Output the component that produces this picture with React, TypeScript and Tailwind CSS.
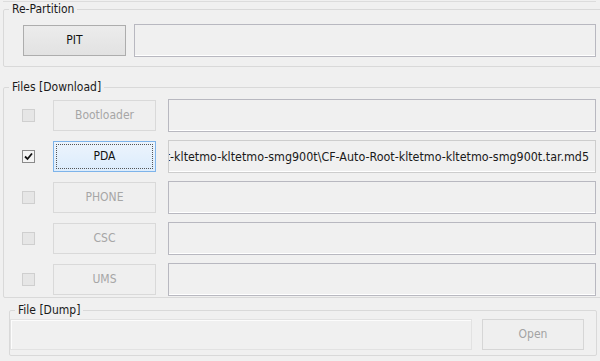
import React from 'react';

const font = "font-['DejaVu_Sans_Condensed','DejaVu_Sans',sans-serif]";

const PATH =
  'C:\\Users\\Chainfire\\Downloads\\CF-Auto-Root-kltetmo-kltetmo-smg900t\\CF-Auto-Root-kltetmo-kltetmo-smg900t.tar.md5';

interface RowProps {
  label: string;
  checked?: boolean;
  value?: string;
}

const CheckBox: React.FC<{ checked?: boolean }> = ({ checked }) =>
  checked ? (
    <div className="w-[13px] h-[13px] shrink-0 border border-[#8a8a8a] bg-[#f4f4f4] flex items-center justify-center">
      <svg width="9" height="9" viewBox="0 0 9 9">
        <path d="M1 4.5 L3.5 7 L8 1.5" fill="none" stroke="#111" strokeWidth="1.8" />
      </svg>
    </div>
  ) : (
    <div className="w-[13px] h-[13px] shrink-0 border border-[#cfcfcf] bg-[#e6e6e6]" />
  );

const FileRow: React.FC<RowProps> = ({ label, checked, value }) => (
  <div className="flex items-center h-[33px]">
    <CheckBox checked={checked} />
    {checked ? (
      <button className="ml-[18px] w-[103px] h-[31px] shrink-0 p-[2px] border border-[#7eb4ea] bg-gradient-to-b from-[#ecf4fc] to-[#dcecfc] text-[#111]">
        <div className="w-full h-full border border-dotted border-[#555] flex items-center justify-center">
          {label}
        </div>
      </button>
    ) : (
      <button className="ml-[18px] w-[103px] h-[31px] shrink-0 border border-[#d9d9d9] bg-[#efefef] text-[#a6a6a6] flex items-center justify-center">
        {label}
      </button>
    )}
    {/* rtl box so the long path overflows to the left and its end stays visible */}
    <div
      dir="rtl"
      className={`ml-[12px] flex-1 min-w-0 h-[33px] overflow-hidden whitespace-nowrap leading-[31px] pl-[2px] pr-[6px] bg-[#f0f0f0] shadow-[inset_0_-1px_0_#ffffff] border ${
        checked ? 'border-[#cdcdcd]' : 'border-[#b8b8c0]'
      }`}
    >
      {value && (
        <span dir="ltr" className="text-[12.4px] text-[#1a1a1a]">
          {value}
        </span>
      )}
    </div>
  </div>
);

export default function App() {
  return (
    <div className={`w-[600px] h-[361px] overflow-hidden bg-[#f0f0f0] text-[12px] leading-[13px] text-[#1a1a1a] ${font}`}>
      <div className="h-[2px] border-b border-[#dcdcdc] ml-[3px] mr-[4px]" />

      {/* Re-Partition */}
      <fieldset className="min-w-0 mt-[1px] ml-[3px] -mr-[4px] border border-[#d9d9d9] rounded-[2px]">
        <legend className="ml-[5px] px-[3px] leading-[13px]">Re-Partition</legend>
        <div className="flex items-center pl-[19px] pr-[7px] pt-[8px] pb-[9px]">
          <button className="w-[103px] h-[31px] shrink-0 border border-[#adadad] bg-gradient-to-b from-[#ececec] to-[#e2e2e2] text-[#111] flex items-center justify-center">
            PIT
          </button>
          <div className="ml-[8px] flex-1 h-[33px] border border-[#b8b8c0] bg-[#f0f0f0] shadow-[inset_0_-1px_0_#ffffff]" />
        </div>
      </fieldset>

      {/* Files [Download] */}
      <fieldset className="min-w-0 mt-[14px] ml-[3px] -mr-[4px] border border-[#d9d9d9] rounded-[2px]">
        <legend className="ml-[5px] px-[3px] leading-[13px]">Files [Download]</legend>
        <div className="flex flex-col gap-[8px] pl-[18px] pr-[7px] pt-[5px] pb-[1px]">
          <FileRow label="Bootloader" />
          <FileRow label="PDA" checked value={PATH} />
          <FileRow label="PHONE" />
          <FileRow label="CSC" />
          <FileRow label="UMS" />
        </div>
      </fieldset>

      {/* File [Dump] */}
      <fieldset className="min-w-0 mt-[6px] ml-[9px] mr-[3px] border border-[#d9d9d9] rounded-[2px]">
        <legend className="ml-[5px] px-[3px] leading-[13px]">File [Dump]</legend>
        <div className="flex items-center pr-[11px] pt-[2px] pb-[5px]">
          <div className="w-[462px] h-[31px] shrink-0 border border-[#e2e2e2] bg-[#f0f0f0] shadow-[inset_1px_1px_0_#fcfcfc]" />
          <button className="ml-[10px] w-[102px] h-[31px] shrink-0 border border-[#d6d6d6] bg-[#efefef] text-[#a3a3a3] flex items-center justify-center">
            Open
          </button>
        </div>
      </fieldset>
    </div>
  );
}
